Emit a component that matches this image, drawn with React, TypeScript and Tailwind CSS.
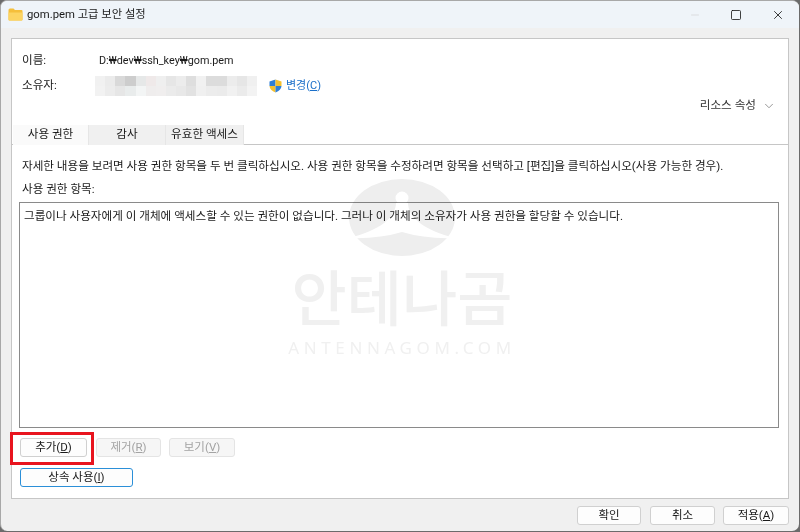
import React from "react";
import { Minus, Square, X, ChevronDown } from "lucide-react";

const font = "font-['Roboto','Noto_Sans_CJK_KR',sans-serif]";

// mosaic over the owner name
const mosaic = [
  "#f1f1f1", "#ebebeb", "#d9d9d9", "#cdcdcd", "#e6e8e8", "#efe9e9", "#efefef", "#e6e6e6", "#ececec", "#dedede", "#f1f1f1", "#dcdcdc", "#dcdcdc", "#ececec", "#e6e6e6", "#f0f0f0",
  "#f2f2f2", "#ececec", "#e6e6e6", "#e9ecec", "#f3f5f5", "#efeded", "#f0eeee", "#ebebeb", "#e8e8e8", "#e2e2e2", "#f0f0f0", "#ececec", "#ebebeb", "#f1f1f1", "#ebebeb", "#f3f3f3",
];

function Btn({ children, className = "" }: any) {
  return (
    <button className={"h-[19px] flex items-center justify-center rounded-[3px] border border-[#d0d0d0] bg-[#fdfdfd] text-[11.5px] text-[#1a1a1a] " + className}>
      {children}
    </button>
  );
}

function Tab({ label, active, className = "" }: any) {
  return (
    <div className={"h-[20px] flex items-center justify-center border-r border-[#e6e6e6] text-[11.6px] text-[#1a1a1a] " + (active ? "bg-[#fafafa] " : "bg-[#f0f0f0] ") + className}>
      {label}
    </div>
  );
}

export default function App() {
  return (
    <div className={"w-[800px] h-[532px] overflow-hidden bg-[#6b6b6b] " + font}>
      <div className="relative h-[531px] w-[799px] rounded-[7px] overflow-hidden border-t border-l border-[#a8a8a8] bg-[#f0f0f0] flex flex-col">
        {/* Title bar */}
        <div className="h-[27px] shrink-0 bg-[#eff4f9] flex items-center pl-[7px]">
          <svg width="15" height="13" viewBox="0 0 15 13" className="shrink-0">
            <path d="M0.5 2 Q0.5 0.5 2 0.5 H5.5 L7 2 H13.5 Q14.5 2 14.5 3 V11.5 Q14.5 12.5 13.5 12.5 H1.5 Q0.5 12.5 0.5 11.5 Z" fill="#f5bf3b" />
            <path d="M0.5 4.5 H14.5 V11.5 Q14.5 12.5 13.5 12.5 H1.5 Q0.5 12.5 0.5 11.5 Z" fill="#fcd462" />
          </svg>
          <span className="ml-[4px] mt-[2px] text-[11.3px] text-[#1a1a1a]">gom.pem 고급 보안 설정</span>
          <div className="ml-auto flex items-center">
            <Minus className="w-[12px] h-[12px] text-[#cfcfcf] mr-[29px]" strokeWidth={1.2} />
            <Square className="w-[12px] h-[12px] text-[#111] mr-[29px]" strokeWidth={1.6} />
            <X className="w-[14px] h-[14px] text-[#111] mr-[14px]" strokeWidth={1.4} />
          </div>
        </div>

        {/* Main panel */}
        <div className="relative mx-[10px] mt-[10px] h-[461px] shrink-0 border border-[#c6c6c6] bg-white flex flex-col">
          <div className="h-[86px] shrink-0 pl-[10px] pr-[12px] pt-[12px] text-[11.6px] text-[#1a1a1a]">
            <div className="h-[20px] flex items-center">
              <span className="w-[77px]">이름:</span>
              <span className="text-[10.8px]">D:₩dev₩ssh_key₩gom.pem</span>
            </div>
            <div className="mt-[5px] h-[20px] flex items-center">
              <span className="w-[73px]">소유자:</span>
              <div className="w-[162px] h-[20px] grid grid-cols-[repeat(16,1fr)] grid-rows-2">
                {mosaic.map((c, i) => (
                  <div key={i} style={{ backgroundColor: c }} />
                ))}
              </div>
              <svg width="13" height="14" viewBox="0 0 13 14" className="ml-[12px]">
                <path d="M6.5 0.5 L0.5 2.5 V7 H6.5 Z" fill="#2f7fd6" />
                <path d="M6.5 0.5 L12.5 2.5 V7 H6.5 Z" fill="#f4c02f" />
                <path d="M0.5 7 Q0.8 11 6.5 13.5 V7 Z" fill="#f4c02f" />
                <path d="M6.5 7 H12.5 Q12.2 11 6.5 13.5 Z" fill="#2f7fd6" />
              </svg>
              <span className="ml-[4px] text-[11px] text-[#1a6fc9]">
                변경(<span className="underline">C</span>)
              </span>
            </div>
            <div className="mt-[1px] flex items-center justify-end text-[#333]">
              <span>리소스 속성</span>
              <ChevronDown className="ml-[6px] w-[14px] h-[14px] text-[#777]" strokeWidth={1.3} />
            </div>
          </div>

          {/* Tabs */}
          <div className="h-[20px] shrink-0 flex pl-[1px] border-b border-[#c6c6c6] bg-white">
            <Tab label="사용 권한" active className="w-[76px]" />
            <Tab label="감사" className="w-[77px]" />
            <Tab label="유효한 액세스" className="w-[78px]" />
          </div>

          <div className="flex-1 flex flex-col px-[7px] text-[11.6px] text-[#1a1a1a]">
            <p className="mt-[12px] pl-[3px] h-[18px] leading-[18px] whitespace-nowrap">
              자세한 내용을 보려면 사용 권한 항목을 두 번 클릭하십시오. 사용 권한 항목을 수정하려면 항목을 선택하고 [편집]을 클릭하십시오(사용 가능한 경우).
            </p>
            <p className="mt-[5px] pl-[3px] h-[18px] leading-[18px]">사용 권한 항목:</p>
            <div className="mt-[4px] h-[226px] w-[760px] border border-[#8a8a8a] px-[4px] pt-[4px] leading-[18px] whitespace-nowrap">
              그룹이나 사용자에게 이 개체에 액세스할 수 있는 권한이 없습니다. 그러나 이 개체의 소유자가 사용 권한을 할당할 수 있습니다.
            </div>

            <div className="mt-[10px] flex ml-[1px]">
              <div className="relative">
                <Btn className="w-[67px]">
                  <span>
                    추가(<span className="underline">D</span>)
                  </span>
                </Btn>
                <div className="absolute left-[-10px] top-[-6px] w-[84px] h-[33px] border-[3px] border-[#e8141e]" />
              </div>
              <Btn className="w-[65px] ml-[9px] !bg-[#f6f6f6] !text-[#a3a3a3] !border-[#e4e4e4]">
                <span>
                  제거(<span className="underline">R</span>)
                </span>
              </Btn>
              <Btn className="w-[66px] ml-[8px] !bg-[#f6f6f6] !text-[#a3a3a3] !border-[#e4e4e4]">
                <span>
                  보기(<span className="underline">V</span>)
                </span>
              </Btn>
            </div>
            <Btn className="mt-[11px] ml-[1px] w-[113px] !border-[#2b8fd8] !border-[1.5px]">
              <span>
                상속 사용(<span className="underline">I</span>)
              </span>
            </Btn>
          </div>

          {/* Watermark */}
          <div className="absolute left-[270px] top-[140px] w-[240px] flex flex-col items-center pointer-events-none mix-blend-multiply">
            <svg width="106" height="77" viewBox="0 0 106 77">
              <ellipse cx="53" cy="38.5" rx="53" ry="38.5" fill="#eeeeee" />
              <circle cx="53" cy="19" r="6.5" fill="#fff" />
              <path d="M47 24 C47 38 30 52 0 59 Q30 60 53 53 Q76 60 106 59 C76 52 59 38 59 24 Z" fill="#fff" />
            </svg>
            <div className="mt-[9px] text-[60px] leading-[60px] font-medium whitespace-nowrap text-[#f0f0f0] font-['Noto_Sans_CJK_KR',sans-serif]">안테나곰</div>
            <div className="mt-[13px] text-[17px] leading-[20px] tracking-[4.6px] whitespace-nowrap text-[#f0f0f0] font-['Noto_Sans',sans-serif]">ANTENNAGOM.COM</div>
          </div>
        </div>

        {/* Footer buttons */}
        <div className="flex justify-end pr-[10px] pt-[7px]">
          <Btn className="w-[64px]">확인</Btn>
          <Btn className="w-[65px] ml-[9px]">취소</Btn>
          <Btn className="w-[66px] ml-[8px]">
            <span>
              적용(<span className="underline">A</span>)
            </span>
          </Btn>
        </div>
      </div>
    </div>
  );
}
